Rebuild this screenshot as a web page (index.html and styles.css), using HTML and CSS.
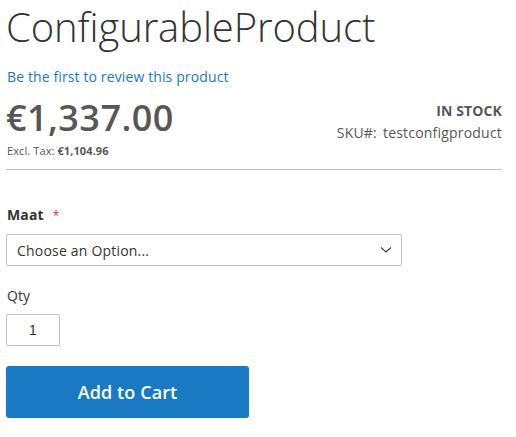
FILE: index.html
```html
<!DOCTYPE html>
<html lang="en">
<head>
<meta charset="utf-8">
<title>ConfigurableProduct</title>
<link rel="stylesheet" href="styles.css">
</head>
<body>
<main class="product">
  <h1 class="page-title">ConfigurableProduct</h1>
  <a class="review-link" href="#">Be the first to review this product</a>
  <div class="price-row">
    <div class="price-box">
      <div class="price">€1,337.00</div>
      <div class="excl">Excl. Tax: <strong>€1,104.96</strong></div>
    </div>
    <div class="stock-sku">
      <div class="stock">In stock</div>
      <div class="sku"><span class="sku-type">SKU#:</span>testconfigproduct</div>
    </div>
  </div>
  <form class="options">
    <label class="label-maat" for="maat">Maat<span class="req">*</span></label>
    <div class="select-wrap">
      <select id="maat" class="select">
        <option>Choose an Option...</option>
      </select>
      <svg class="chevron" width="12" height="8" viewBox="0 0 12 8" aria-hidden="true"><path d="M1 1.5 L6 6 L11 1.5" fill="none" stroke="#444" stroke-width="1.2"/></svg>
    </div>
    <label class="label-qty" for="qty">Qty</label>
    <input id="qty" class="qty" type="text" value="1">
    <button type="button" class="tocart">Add to Cart</button>
  </form>
</main>
</body>
</html>
```
FILE: styles.css
```css
html, body {
  margin: 0;
  padding: 0;
  background: #ffffff;
}
body {
  font-family: "Open Sans", "Liberation Sans", sans-serif;
  color: #333333;
  font-size: 14px;
  line-height: 20px;
  letter-spacing: 0.12px;
}
.product {
  display: flex;
  flex-direction: column;
  align-items: flex-start;
  padding: 0 14px 0 6px;
}
.page-title {
  margin: 5px 0 0 0;
  font-size: 40px;
  line-height: 44px;
  font-weight: 300;
  color: #333333;
  letter-spacing: -0.1px;
}
.review-link {
  margin-top: 18px;
  color: #1979c3;
  text-decoration: none;
  font-size: 14px;
  line-height: 20px;
  padding-left: 1px;
}
.price-row {
  align-self: stretch;
  display: flex;
  justify-content: space-between;
  align-items: flex-start;
  margin-top: 13px;
  padding-bottom: 10px;
  border-bottom: 1px solid #c1c1c1;
}
.price-box {
  display: flex;
  flex-direction: column;
}
.price {
  font-size: 36px;
  line-height: 36px;
  font-weight: 600;
  color: #575757;
  letter-spacing: 0.45px;
}
.excl {
  margin-top: 7px;
  font-size: 11px;
  line-height: 16px;
  color: #575757;
  padding-left: 1px;
  letter-spacing: 0.1px;
}
.excl strong {
  font-weight: 700;
}
.stock-sku {
  display: flex;
  flex-direction: column;
  align-items: flex-end;
  padding-top: 1px;
  color: #575757;
}
.stock {
  text-transform: uppercase;
  font-weight: 700;
  margin-bottom: 2px;
}
.sku {
  letter-spacing: 0.2px;
}
.sku-type {
  margin-right: 6px;
}
.options {
  align-self: stretch;
  display: flex;
  flex-direction: column;
  align-items: flex-start;
}
.label-maat {
  margin-top: 35px;
  font-weight: 700;
  color: #333333;
  padding-left: 1px;
}
.req {
  color: #e02b27;
  font-size: 12px;
  margin-left: 9px;
  font-weight: 400;
}
.select-wrap {
  position: relative;
  margin-top: 8px;
  width: 396px;
}
.select {
  -webkit-appearance: none;
  appearance: none;
  display: block;
  width: 396px;
  height: 32px;
  box-sizing: border-box;
  border: 1px solid #c2c2c2;
  border-radius: 1px;
  background: #ffffff;
  font-family: "Open Sans", "Liberation Sans", sans-serif;
  font-size: 14px;
  letter-spacing: 0.2px;
  color: #333333;
  padding: 0 30px 0 10px;
  margin: 0;
}
.chevron {
  position: absolute;
  right: 10px;
  top: 12px;
  pointer-events: none;
}
.label-qty {
  margin-top: 20px;
  color: #333333;
  padding-left: 1px;
}
.qty {
  margin-top: 8px;
  width: 54px;
  height: 32px;
  box-sizing: border-box;
  border: 1px solid #c2c2c2;
  border-radius: 1px;
  text-align: center;
  font-family: "Liberation Sans", Arial, sans-serif;
  font-size: 14px;
  color: #333333;
  padding: 0;
}
.tocart {
  margin-top: 20px;
  width: 243px;
  height: 52px;
  border: none;
  border-radius: 3px;
  background: #1979c3;
  color: #ffffff;
  font-family: "Open Sans", "Liberation Sans", sans-serif;
  font-size: 18px;
  line-height: 22px;
  font-weight: 600;
  letter-spacing: 0.1px;
  padding: 0;
  cursor: pointer;
}
```
